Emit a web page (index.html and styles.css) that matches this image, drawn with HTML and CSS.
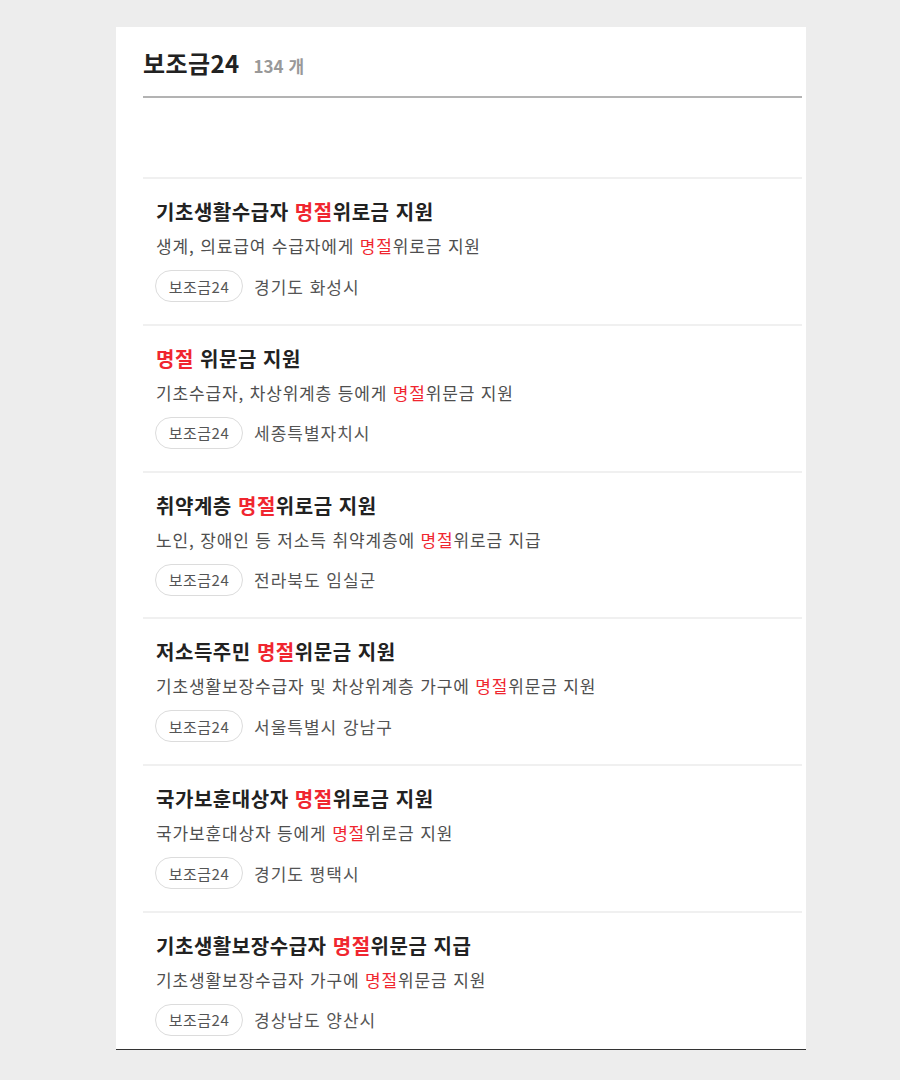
FILE: index.html
```html
<!DOCTYPE html>
<html lang="ko">
<head>
<meta charset="utf-8">
<link rel="stylesheet" href="styles.css">
</head>
<body>
<div class="card">
  <div class="header">
    <h1 class="title">보조금24</h1>
    <span class="count">134 개</span>
  </div>
  <div class="divider"></div>
  <div class="spacer"></div>
  <ul class="list">
    <li class="item">
      <div class="item-title">기초생활수급자 <em>명절</em>위로금 지원</div>
      <div class="item-desc">생계, 의료급여 수급자에게 <em>명절</em>위로금 지원</div>
      <div class="meta"><span class="tag">보조금24</span><span class="region">경기도 화성시</span></div>
    </li>
    <li class="item">
      <div class="item-title"><em>명절</em> 위문금 지원</div>
      <div class="item-desc">기초수급자, 차상위계층 등에게 <em>명절</em>위문금 지원</div>
      <div class="meta"><span class="tag">보조금24</span><span class="region">세종특별자치시</span></div>
    </li>
    <li class="item">
      <div class="item-title">취약계층 <em>명절</em>위로금 지원</div>
      <div class="item-desc">노인, 장애인 등 저소득 취약계층에 <em>명절</em>위로금 지급</div>
      <div class="meta"><span class="tag">보조금24</span><span class="region">전라북도 임실군</span></div>
    </li>
    <li class="item">
      <div class="item-title">저소득주민 <em>명절</em>위문금 지원</div>
      <div class="item-desc">기초생활보장수급자 및 차상위계층 가구에 <em>명절</em>위문금 지원</div>
      <div class="meta"><span class="tag">보조금24</span><span class="region">서울특별시 강남구</span></div>
    </li>
    <li class="item">
      <div class="item-title">국가보훈대상자 <em>명절</em>위로금 지원</div>
      <div class="item-desc">국가보훈대상자 등에게 <em>명절</em>위로금 지원</div>
      <div class="meta"><span class="tag">보조금24</span><span class="region">경기도 평택시</span></div>
    </li>
    <li class="item">
      <div class="item-title">기초생활보장수급자 <em>명절</em>위문금 지급</div>
      <div class="item-desc">기초생활보장수급자 가구에 <em>명절</em>위문금 지원</div>
      <div class="meta"><span class="tag">보조금24</span><span class="region">경상남도 양산시</span></div>
    </li>
  </ul>
</div>
</body>
</html>
```
FILE: styles.css
```css
html, body {
  margin: 0;
  padding: 0;
  background: #ededed;
}
body {
  font-family: "Noto Sans CJK KR", "Noto Sans", sans-serif;
  color: #222;
}
.card {
  margin: 27px 0 0 116px;
  width: 690px;
  height: 1023px;
  background: #fff;
  overflow: hidden;
  border-bottom: 1px solid #333;
  padding: 0 4px 0 27px;
  box-sizing: border-box;
}
.header {
  display: flex;
  align-items: baseline;
  gap: 14px;
  padding: 20px 0 17px;
  height: 69px;
  box-sizing: border-box;
}
.title {
  margin: 0;
  font-size: 24px;
  line-height: 32px;
  font-weight: 700;
  letter-spacing: 0.4px;
  color: #222;
}
.count {
  font-size: 17px;
  font-weight: 700;
  color: #999;
}
.divider {
  height: 2px;
  background: #b3b3b3;
}
.spacer {
  height: 79px;
}
.list {
  list-style: none;
  margin: 0;
  padding: 0;
}
.item {
  border-top: 2px solid #f0f0f0;
  padding: 19px 0 21.8px 13px;
  display: flex;
  flex-direction: column;
}
.item em {
  font-style: normal;
  color: #f0262f;
}
.item-title {
  font-size: 20px;
  line-height: 28px;
  font-weight: 700;
  letter-spacing: 0.55px;
  color: #222;
}
.item-desc {
  margin-top: 8px;
  font-size: 17px;
  line-height: 24px;
  color: #4f4f4f;
  letter-spacing: 0.85px;
}
.meta {
  margin-top: 12px;
  display: flex;
  align-items: center;
  gap: 11px;
  height: 32px;
}
.tag {
  display: inline-flex;
  align-items: center;
  justify-content: center;
  box-sizing: border-box;
  width: 88px;
  height: 32px;
  margin-left: -1px;
  border: 1px solid #dcdcdc;
  border-radius: 16px;
  font-size: 15px;
  color: #555;
  letter-spacing: 0.5px;
}
.region {
  font-size: 17px;
  color: #555;
  letter-spacing: 1px;
}
```
